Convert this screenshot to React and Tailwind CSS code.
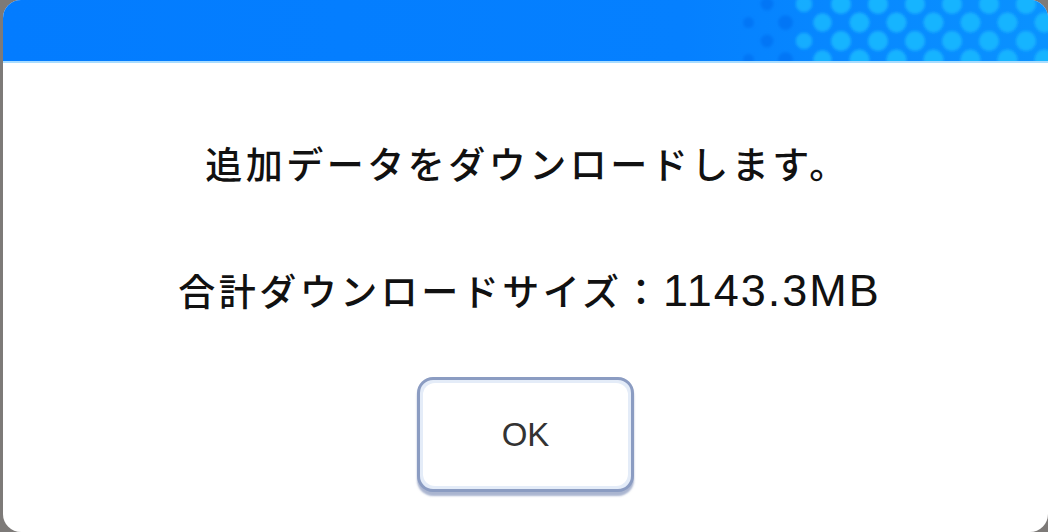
import React from "react";

// Dot pattern for the right half of the title bar: a staggered grid whose
// dots swell towards the right edge.
function DotField() {
  const dots = [];
  const dx = 37;
  const dy = 18.5;
  for (let row = -1; row < 5; row++) {
    const offset = row % 2 === 0 ? 0 : dx / 2;
    for (let col = 0; col < 12; col++) {
      const x = 690 + col * dx + offset;
      const y = row * dy + 4;
      if (x < 735) continue;
      const t = Math.max(0, Math.min(1, (x - 745) / 90));
      const r = 5.5 + t * 4.5;
      const dark = x < 790;
      dots.push(
        <circle
          key={`${row}-${col}`}
          cx={x}
          cy={y}
          r={r}
          fill={dark ? "#0670f2" : "#18b4ff"}
          opacity={dark ? 0.7 : 0.6 + t * 0.4}
        />
      );
    }
  }
  return (
    <svg
      className="absolute inset-0"
      width="1045"
      height="61"
      viewBox="0 0 1045 61"
    >
      <defs>
        <linearGradient id="barFade" x1="0" x2="1" y1="0" y2="0">
          <stop offset="0" stopColor="#037cff" />
          <stop offset="0.65" stopColor="#0580ff" />
          <stop offset="1" stopColor="#0a92ff" />
        </linearGradient>
        <filter id="soft" x="-10%" y="-10%" width="120%" height="120%">
          <feGaussianBlur stdDeviation="1.6" />
        </filter>
      </defs>
      <rect x="0" y="0" width="1045" height="61" fill="url(#barFade)" />
      <g filter="url(#soft)">{dots}</g>
    </svg>
  );
}

export default function App() {
  return (
    <div className="w-[1048px] h-[532px] bg-[#7d7a78] overflow-hidden">
      <div
        className="ml-[3px] w-[1045px] h-[532px] bg-white rounded-[18px] overflow-hidden flex flex-col"
        style={{ fontFamily: '"Noto Sans CJK JP", "Noto Sans", sans-serif' }}
      >
        <div className="relative h-[61px] shrink-0 overflow-hidden">
          <DotField />
        </div>
        <div className="h-[2px] bg-[#a8dcff] shrink-0" />
        <div className="flex flex-col items-center flex-1">
          <p className="mt-[78px] text-[37px] leading-[44px] tracking-[3.5px] font-medium text-[#111] pl-[4px]">
            追加データをダウンロードします。
          </p>
          <p className="mt-[83px] pl-[8px] flex items-baseline text-[37px] leading-[44px] font-medium text-[#111]">
            <span className="tracking-[3.5px]">合計ダウンロードサイズ：</span>
            <span
              className="text-[45px] leading-[44px] font-normal tracking-[2px]"
              style={{ fontFamily: '"Liberation Sans", Arial, sans-serif' }}
            >
              1143.3MB
            </span>
          </p>
          <button className="mt-[64px] w-[217px] h-[115px] rounded-[16px] border-[3px] border-[#8b9cc2] bg-[#e4ecf8] p-[3px] shadow-[0_4px_2px_rgba(100,120,170,0.55)]">
            <span
              className="flex w-full h-full items-center justify-center rounded-[12px] bg-white text-[33px] text-[#333]"
              style={{ fontFamily: '"Liberation Sans", Arial, sans-serif' }}
            >
              OK
            </span>
          </button>
        </div>
      </div>
    </div>
  );
}
